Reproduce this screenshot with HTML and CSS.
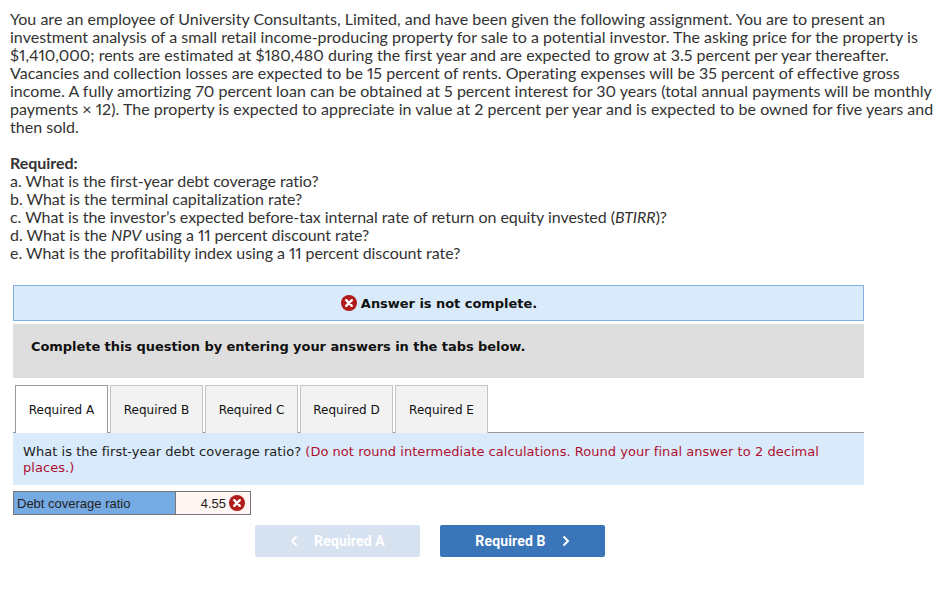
FILE: index.html
```html
<!DOCTYPE html>
<html lang="en">
<head>
<meta charset="utf-8">
<title>Assignment</title>
<link rel="stylesheet" href="styles.css">
</head>
<body>
<main class="page">
  <section class="question">
    <p class="intro">You are an employee of University Consultants, Limited, and have been given the following assignment. You are to present an<br>investment analysis of a small retail income-producing property for sale to a potential investor. The asking price for the property is<br>$1,410,000; rents are estimated at $180,480 during the first year and are expected to grow at 3.5 percent per year thereafter.<br>Vacancies and collection losses are expected to be 15 percent of rents. Operating expenses will be 35 percent of effective gross<br>income. A fully amortizing 70 percent loan can be obtained at 5 percent interest for 30 years (total annual payments will be monthly<br>payments × 12). The property is expected to appreciate in value at 2 percent per year and is expected to be owned for five years and<br>then sold.</p>
    <p class="reqs"><strong>Required:</strong><br>a. What is the first-year debt coverage ratio?<br>b. What is the terminal capitalization rate?<br>c. What is the investor’s expected before-tax internal rate of return on equity invested (<em>BTIRR</em>)?<br>d. What is the <em>NPV</em> using a 11 percent discount rate?<br>e. What is the profitability index using a 11 percent discount rate?</p>
  </section>
  <section class="work">
    <div class="status">
      <svg class="x-icon" viewBox="0 0 16 16" aria-hidden="true"><circle cx="8" cy="8" r="8"/><path d="M5.200 5.200l5.600 5.600M10.800 5.200l-5.600 5.600"/></svg>
      <span>Answer is not complete.</span>
    </div>
    <div class="instruction">Complete this question by entering your answers in the tabs below.</div>
    <div class="tabs">
      <div class="tab active">Required A</div>
      <div class="tab">Required B</div>
      <div class="tab">Required C</div>
      <div class="tab">Required D</div>
      <div class="tab">Required E</div>
    </div>
    <div class="prompt">What is the first-year debt coverage ratio? <span class="note">(Do not round intermediate calculations. Round your final answer to 2 decimal places.)</span></div>
    <div class="answer">
      <div class="answer-label">Debt coverage ratio</div>
      <div class="answer-value">4.55
        <svg class="x-icon" viewBox="0 0 16 16" aria-hidden="true"><circle cx="8" cy="8" r="8"/><path d="M5.200 5.200l5.600 5.600M10.800 5.200l-5.600 5.600"/></svg>
      </div>
    </div>
    <div class="nav">
      <div class="btn disabled">
        <svg class="chev" viewBox="0 0 8 12" aria-hidden="true"><path d="M6.500 1.500L2 6l4.500 4.500"/></svg>
        <span>Required A</span>
      </div>
      <div class="btn">
        <span>Required B</span>
        <svg class="chev" viewBox="0 0 8 12" aria-hidden="true"><path d="M1.500 1.500L6 6l-4.500 4.500"/></svg>
      </div>
    </div>
  </section>
</main>
</body>
</html>
```
FILE: styles.css
```css
* { box-sizing: border-box; }
html, body { margin: 0; background: #fff; }
body { width: 948px; height: 611px; overflow: hidden; }
.page { padding: 10px 0 0 10px; }
.question { color: #333; font: 16px/18px "Lato", sans-serif; font-variant-numeric: proportional-nums; }
.intro, .reqs { margin: 0; white-space: nowrap; letter-spacing: 0.02px; }
.reqs { margin-top: 18px; letter-spacing: -0.05px; }
.reqs strong { font-weight: 700; }
.work { margin: 23px 0 0 3px; width: 851px; }
.status {
  height: 36px;
  background: #d9ebfa;
  border: 1px solid #7fb0de;
  display: flex; align-items: center; justify-content: center;
  gap: 4px;
  padding-left: 1px;
  font: bold 13px "DejaVu Sans", sans-serif;
  letter-spacing: -0.04px;
  color: #111;
}
.x-icon { width: 16px; height: 16px; flex: none; }
.x-icon circle { fill: #b31b1b; }
.x-icon path { stroke: #fff; stroke-width: 2.400; stroke-linecap: round; fill: none; }
.instruction {
  margin-top: 3px;
  height: 54px;
  background: #dedede;
  padding: 14px 18px 0;
  font: bold 13px/18px "DejaVu Sans", sans-serif;
  letter-spacing: -0.06px;
  color: #111;
}
.tabs { display: flex; gap: 2px; padding: 7px 0 0 2px; height: 55px; border-bottom: 1px solid #999; }
.tab {
  width: 93px;
  height: 48px;
  background: #f2f2f2;
  border: 1px solid #c4c4c4;
  border-bottom: 0;
  display: flex; align-items: center; justify-content: center;
  font: 12px "DejaVu Sans", sans-serif;
  color: #111;
}
.tab.active { background: #fff; border-color: #999; height: 48px; position: relative; z-index: 1; }
.prompt {
  background: #d9ebfa;
  height: 52px;
  padding: 11px 10px 0;
  font: 13px/16px "DejaVu Sans", sans-serif;
  letter-spacing: 0.04px;
  color: #222;
}
.note { color: #b01030; }
.answer {
  margin-top: 6px;
  width: 238px; height: 24px;
  display: flex;
  border: 1px solid #777;
  font: 13px "Liberation Sans", sans-serif;
  color: #222;
}
.answer-label { width: 162px; background: #76aae3; border-right: 1px solid #777; padding: 4px 0 0 3px; }
.answer-value { flex: 1; background: #fff6f4; display: flex; align-items: center; justify-content: flex-end; gap: 3px; padding-right: 5px; }
.nav { display: flex; gap: 20px; margin: 10px 0 0 242px; }
.btn {
  width: 165px; height: 32px;
  background: #3a75ba;
  border-radius: 2px;
  display: flex; align-items: center; justify-content: center; gap: 16px;
  color: #fff;
  font: bold 14px "Roboto", sans-serif;
  letter-spacing: 0.15px;
}
.btn.disabled { background: #d7e2f0; }
.chev { width: 8px; height: 12px; }
.chev path { stroke: #fff; stroke-width: 2; fill: none; }
```
